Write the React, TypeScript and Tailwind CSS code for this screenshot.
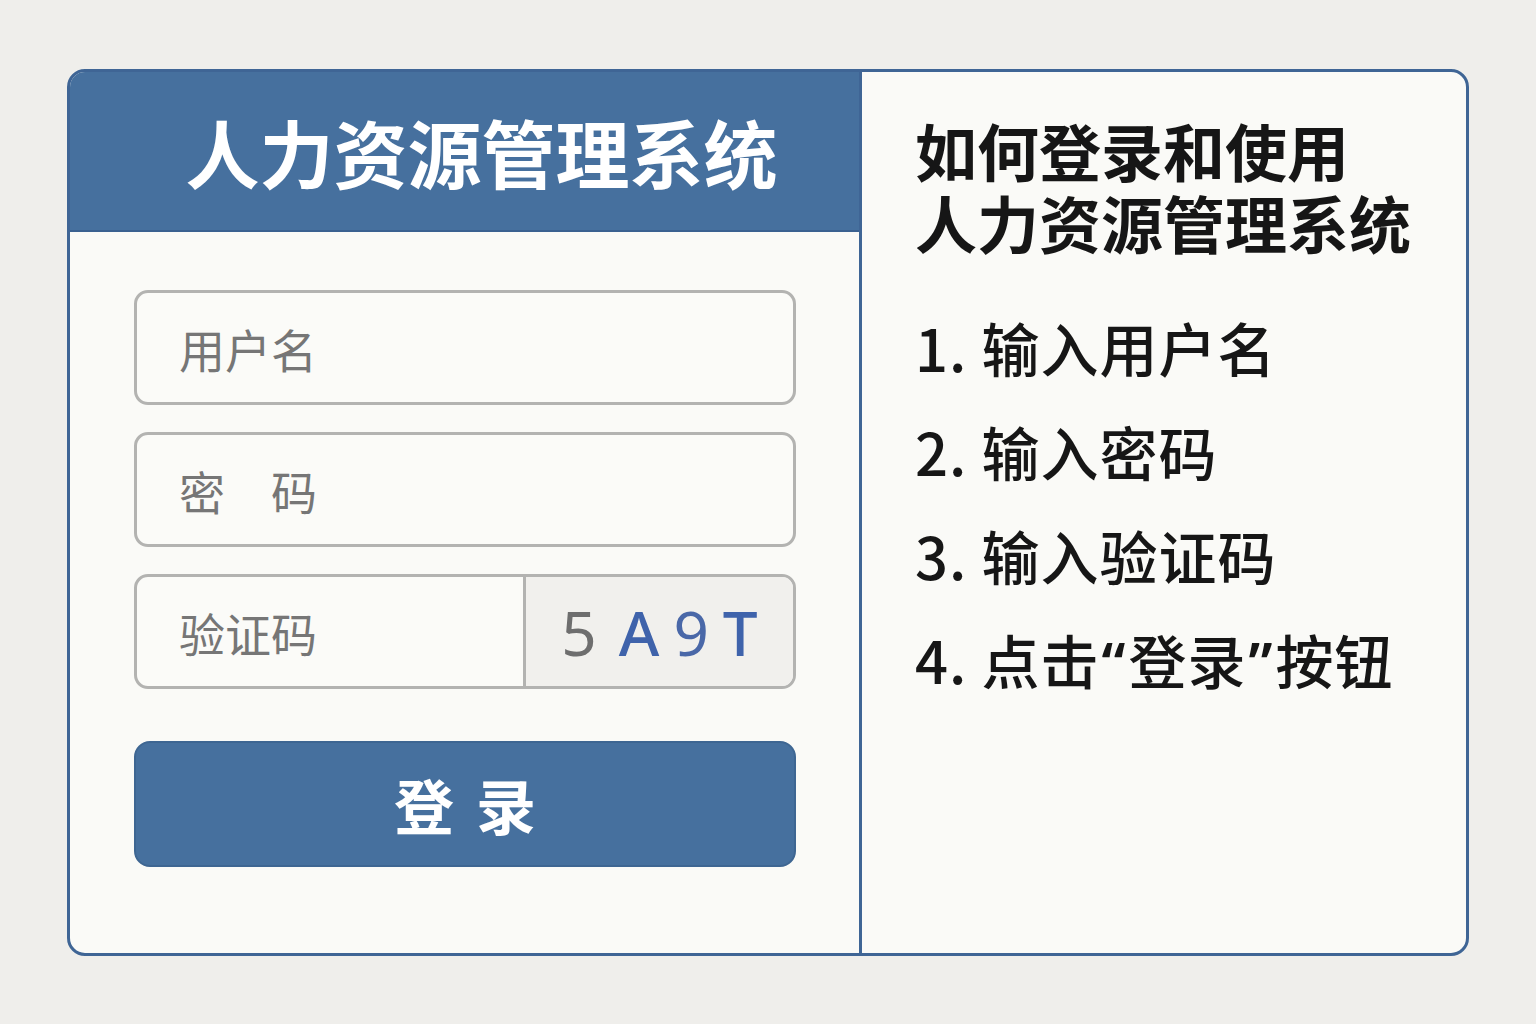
import React from 'react';

const cjk = "font-['Noto_Sans_CJK_SC','Noto_Sans',sans-serif]";

const Field: React.FC<{ label: string }> = ({ label }) => (
    <div className="h-[115px] rounded-[14px] border-[3px] border-[#b3b3b1] bg-[#fbfbf8] flex items-center pl-[42px]">
        <span className="text-[46px] text-[#767676] leading-none">{label}</span>
    </div>
);

const Q: React.FC<{ c: string }> = ({ c }) => (
    <span className="font-['Noto_Sans',sans-serif] font-semibold mx-[2px]">{c}</span>
);

const App: React.FC = () => {
    const steps: React.ReactNode[] = [
        '输入用户名',
        '输入密码',
        '输入验证码',
        <>
            点击<Q c="“" />登录<Q c="”" />按钮
        </>,
    ];

    return (
        <div className={`min-h-screen w-full bg-[#efeeeb] pt-[69px] pl-[67px] ${cjk}`}>
            <div className="w-[1402px] h-[887px] rounded-[18px] border-[3px] border-[#3f6595] bg-[#fafaf7] overflow-hidden flex">
                {/* Left: login form */}
                <div className="w-[792px] flex flex-col border-r-[3px] border-[#3f6595]">
                    <div className="h-[160px] bg-[#46709e] border-b-[2px] border-[#3a6190] flex items-center justify-center pl-[34px]">
                        <h1 className="text-[74px] font-bold text-white leading-none">人力资源管理系统</h1>
                    </div>
                    <div className="flex-1 pl-[64px] pr-[63px] pt-[58px] flex flex-col">
                        <div className="flex flex-col gap-[27px]">
                            <Field label="用户名" />
                            <Field label="密　码" />
                            <div className="h-[115px] rounded-[14px] border-[3px] border-[#b3b3b1] bg-[#fbfbf8] flex overflow-hidden">
                                <div className="flex-1 flex items-center pl-[42px]">
                                    <span className="text-[46px] text-[#767676] leading-none">验证码</span>
                                </div>
                                <div className="w-[270px] border-l-[3px] border-[#b3b3b1] bg-[#f1f0ed] flex items-center justify-center gap-[14px] font-['Noto_Sans',sans-serif] text-[62px] leading-none">
                                    <span className="text-[#6e6e6e] mr-[8px]">5</span>
                                    <span className="text-[#3f63ab] font-medium">A</span>
                                    <span className="text-[#4a68a8]">9</span>
                                    <span className="text-[#3f63ab] font-medium">T</span>
                                </div>
                            </div>
                        </div>
                        <button
                            type="button"
                            className="mt-[52px] h-[126px] rounded-[16px] bg-[#46709e] border-[2px] border-[#3e6692] text-white text-[60px] font-bold leading-none tracking-[22px] pl-[22px]"
                        >
                            登录
                        </button>
                    </div>
                </div>

                {/* Right: instructions */}
                <div className="flex-1 pl-[53px] pt-[42px] text-[#161616]">
                    <h2 className="text-[62px] font-bold">
                        <span className="block leading-[72px]">如何登录和使用</span>
                        <span className="block leading-[72px]">人力资源管理系统</span>
                    </h2>
                    <ol className="mt-[56px] flex flex-col gap-[38px]">
                        {steps.map((s, i) => (
                            <li key={i} className="text-[58px] font-medium leading-[66px] tracking-[1px] whitespace-nowrap">
                                {i + 1}. {s}
                            </li>
                        ))}
                    </ol>
                </div>
            </div>
        </div>
    );
};

export default App;
